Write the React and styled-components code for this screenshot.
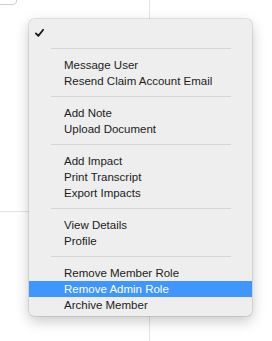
import React from 'react'
import styled, { createGlobalStyle } from 'styled-components'

const sections = [
  ['Message User', 'Resend Claim Account Email'],
  ['Add Note', 'Upload Document'],
  ['Add Impact', 'Print Transcript', 'Export Impacts'],
  ['View Details', 'Profile'],
  ['Remove Member Role', 'Remove Admin Role', 'Archive Member'],
]

const active = 'Remove Admin Role'

function App() {
  return (
    <Page>
      <GlobalStyle />
      <LeftPane>
        <Stub />
        <ListRow />
      </LeftPane>
      <RightPane />

      <Menu>
        <CheckRow>
          <svg width="9" height="8" viewBox="0 0 9 8">
            <path d="M0.9 4.4 L3.3 6.9 L8.2 0.8" fill="none" stroke="#1a1a1a" strokeWidth="1.8" strokeLinecap="round" strokeLinejoin="round" />
          </svg>
        </CheckRow>
        {sections.map((group, i) => (
          <React.Fragment key={i}>
            <Separator />
            {group.map(label => (
              <Item key={label} highlighted={label === active}>
                {label}
              </Item>
            ))}
          </React.Fragment>
        ))}
      </Menu>
    </Page>
  )
}

export default App

const GlobalStyle = createGlobalStyle`
html, body {
  margin:0;
  padding:0;
  background:#fff;
}
body {
  font-family:"Liberation Sans", Arial, sans-serif;
}
`

const Page = styled.div`
position:relative;
width:272px;
height:341px;
overflow:hidden;
display:flex;
background:#fff;
`

const LeftPane = styled.div`
width:149px;
border-right:1px solid #e4e4e4;
display:flex;
flex-direction:column;
`

const RightPane = styled.div`
flex:1;
`

const Stub = styled.div`
width:24px;
height:22px;
margin:-19px 0 0 -9px;
border:1px solid #cfcfcf;
border-radius:4px;
background:#fff;
`

const ListRow = styled.div`
height:206px;
border-bottom:1px solid #e2e2e2;
`

const Menu = styled.div`
position:absolute;
left:29px;
top:19px;
width:223px;
padding:6px 0 3px;
box-sizing:border-box;
background:#eeeeee;
border-radius:5px;
box-shadow:0 0 0 0.5px rgba(0,0,0,0.18), 0 5px 14px rgba(0,0,0,0.22);
`

const CheckRow = styled.div`
height:16px;
display:flex;
align-items:center;
padding-left:6px;
`

const Separator = styled.div`
height:1px;
margin:7px 21px 8px 22px;
background:#d6d6d6;
`

const Item = styled.div`
height:16px;
line-height:16px;
padding-left:35px;
font-size:11.5px;
color:${p => (p.highlighted ? '#fff' : '#1c1c1c')};
background:${p => (p.highlighted ? '#3f97fd' : 'transparent')};
white-space:nowrap;
`
